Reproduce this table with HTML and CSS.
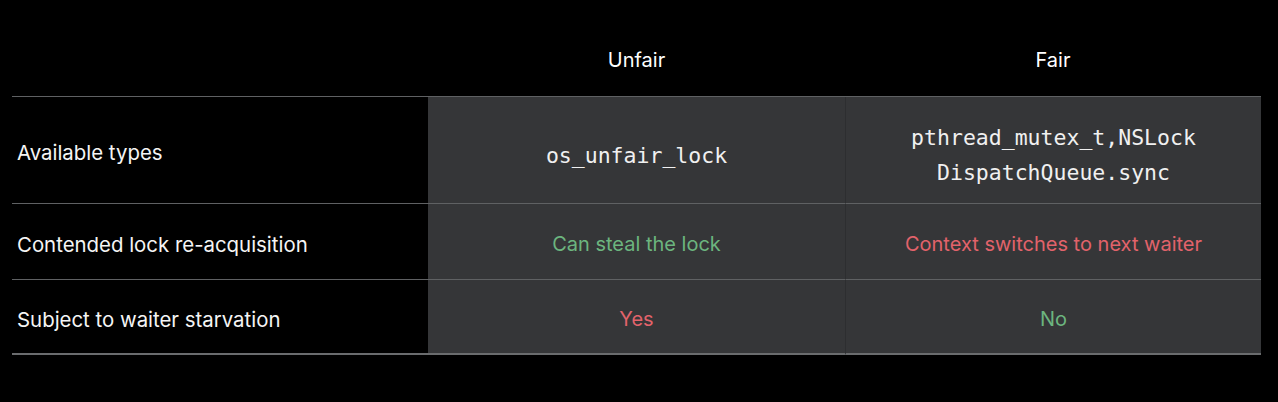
FILE: index.html
```html
<!DOCTYPE html>
<html>
<head>
<meta charset="utf-8">
<link rel="stylesheet" href="styles.css">
</head>
<body>
<div class="table">
  <div class="head blank"></div>
  <div class="head">Unfair</div>
  <div class="head">Fair</div>

  <div class="label r1">Available types</div>
  <div class="cell r1 unfair code">os_unfair_lock</div>
  <div class="cell r1 fair code">pthread_mutex_t,NSLock<br>DispatchQueue.sync</div>

  <div class="label r2">Contended lock re-acquisition</div>
  <div class="cell r2 unfair good">Can steal the lock</div>
  <div class="cell r2 fair bad">Context switches to next waiter</div>

  <div class="label r3">Subject to waiter starvation</div>
  <div class="cell r3 unfair bad">Yes</div>
  <div class="cell r3 fair good">No</div>
</div>
</body>
</html>
```
FILE: styles.css
```css
html, body {
  margin: 0;
  padding: 0;
  background: #000;
  width: 1278px;
  height: 402px;
  overflow: hidden;
}
body {
  padding-left: 12px;
  font-family: Inter, "Noto Sans", sans-serif;
  color: #f2f2f2;
}
.table {
  display: grid;
  grid-template-columns: 416px 417px 416px;
  grid-template-rows: 97px 107px 76px 75px;
  width: 1249px;
}
.head {
  display: flex;
  align-items: flex-end;
  justify-content: center;
  padding-bottom: 24px;
  font-size: 20px;
  color: #fff;
  border-bottom: 1px solid #5f6163;
  box-sizing: border-box;
}
.label, .cell {
  display: flex;
  align-items: center;
  border-bottom: 1px solid #5f6163;
  box-sizing: border-box;
}
.r3 { border-bottom: 2px solid #6a6c6e; }
.label {
  padding-left: 5px;
  padding-top: 5px;
  font-size: 20.4px;
  color: #f5f5f5;
}
.cell {
  justify-content: center;
  text-align: center;
  background: #353638;
  font-size: 20px;
  padding-top: 4px;
}
.r3.cell { padding-top: 5px; }
.fair { border-left: 1px solid #2d2e30; }
.code {
  font-family: "DejaVu Sans Mono", "Liberation Mono", monospace;
  font-size: 21.5px;
  line-height: 35px;
  color: #f0f0f0;
}
.r1.unfair { padding-top: 11px; }
.r1.fair { padding-top: 10px; }
.good { color: #6cb57f; }
.bad { color: #e2636b; }
```
